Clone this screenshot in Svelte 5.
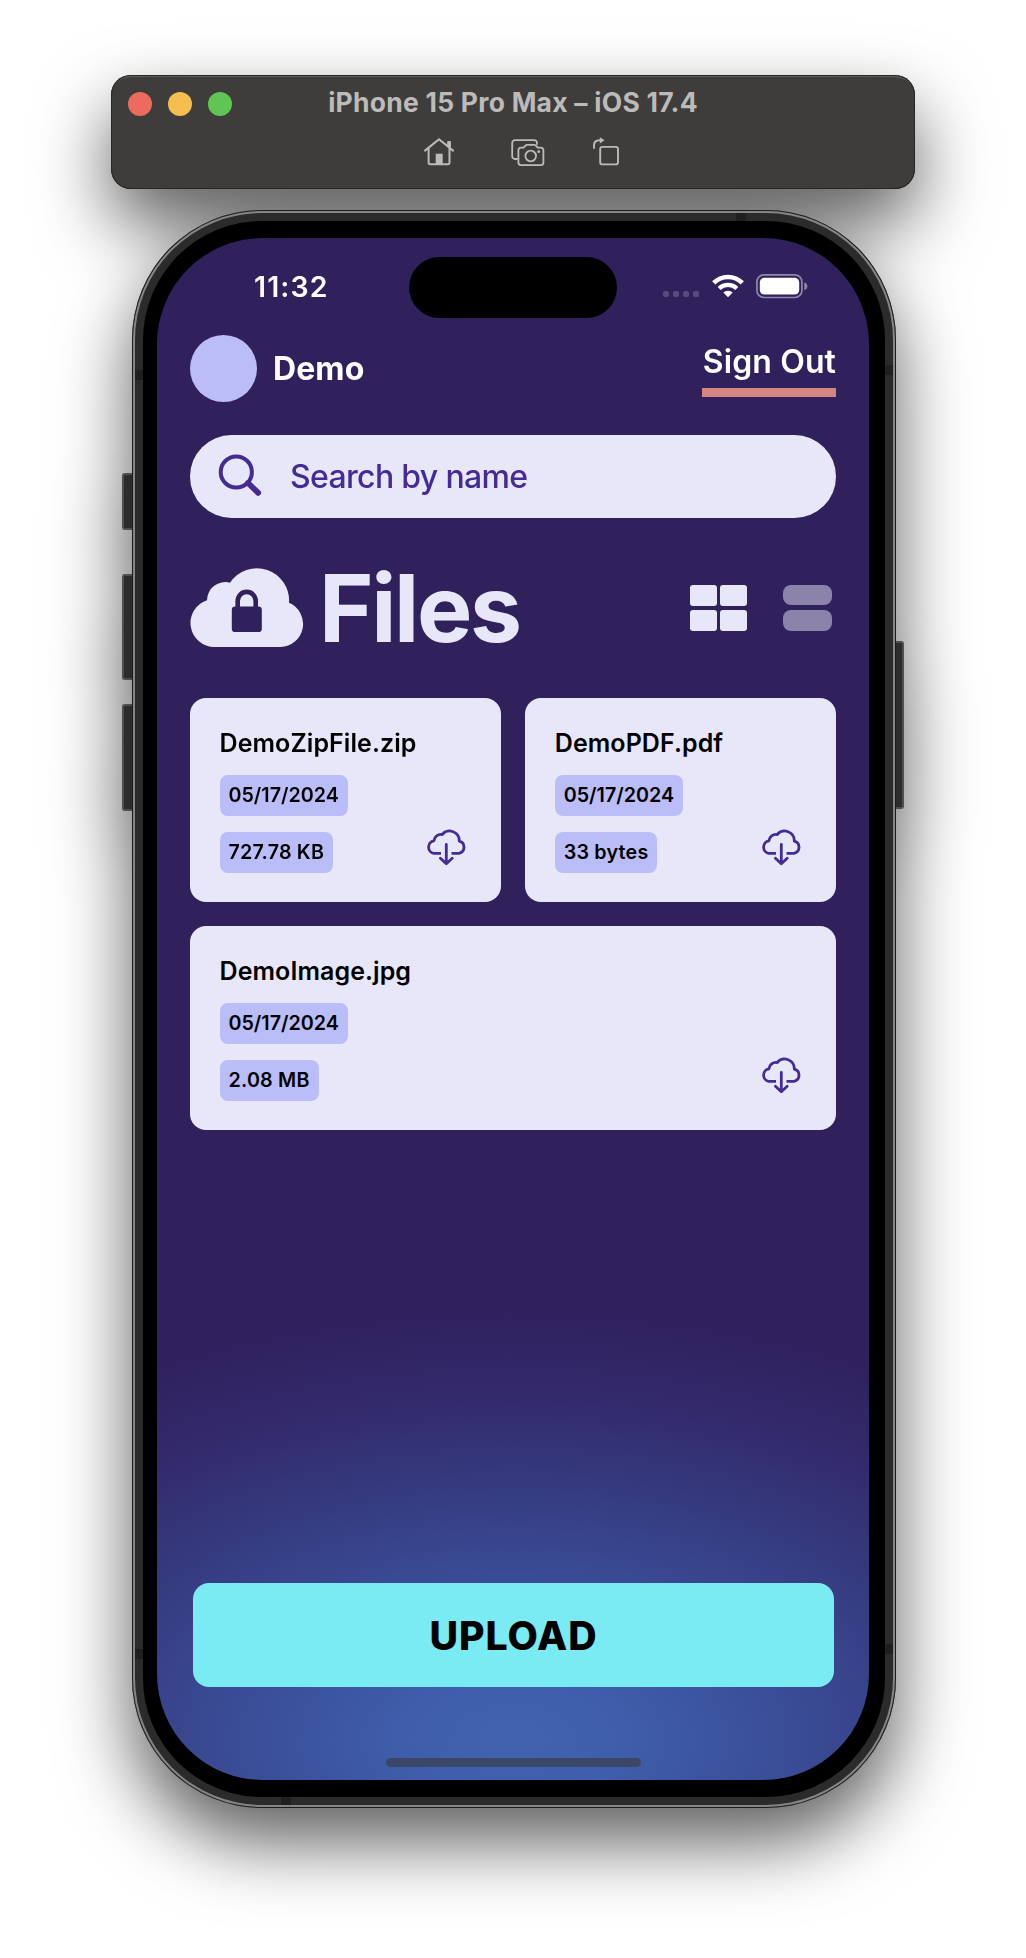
<script>
  const files = [
    { name: 'DemoZipFile.zip', date: '05/17/2024', size: '727.78 KB' },
    { name: 'DemoPDF.pdf', date: '05/17/2024', size: '33 bytes' },
    { name: 'DemoImage.jpg', date: '05/17/2024', size: '2.08 MB', wide: true }
  ];
</script>

<main class="stage">
  <header class="toolbar">
    <div class="titlebar">
      <div class="lights">
        <span class="light close"></span>
        <span class="light minimise"></span>
        <span class="light zoom"></span>
      </div>
      <h1>iPhone 15 Pro Max – iOS 17.4</h1>
    </div>
    <div class="tools">
      <svg class="home" width="30" height="30" viewBox="0 0 30 30" fill="none" stroke="currentColor" stroke-width="2" stroke-linecap="round" stroke-linejoin="round">
        <path d="M1 13.6 15 2.2 29 13.6" />
        <path d="M4.6 11.5V25.6a1.6 1.6 0 0 0 1.6 1.6H23.9a1.6 1.6 0 0 0 1.6-1.6V11.5" />
        <path d="M24 4.6h2.4v6.4L24 9Z" fill="currentColor" stroke-width="1" />
        <path d="M11.7 16.7h7v10.5h-7z" fill="currentColor" stroke="none" />
      </svg>
      <svg class="camera" width="34" height="30" viewBox="0 0 34 30" fill="none" stroke="currentColor" stroke-width="1.8" stroke-linecap="round" stroke-linejoin="round">
        <path d="M6 22H4a2.8 2.8 0 0 1-2.8-2.8V5.9A2.8 2.8 0 0 1 4 3.1H23.2A2.8 2.8 0 0 1 26 5.9V7" />
        <path d="M10 10.6H12.6L14.7 8.3Q15.2 7.8 16 7.8H23.4Q24.2 7.8 24.7 8.3L26.7 10.6H29.8A2.6 2.6 0 0 1 32.4 13.2V25.6A2.6 2.6 0 0 1 29.8 28.2H10A2.6 2.6 0 0 1 7.4 25.6V13.2A2.6 2.6 0 0 1 10 10.6Z" />
        <circle cx="19.7" cy="19" r="5.3" />
        <circle cx="27.7" cy="14.7" r="1.4" fill="currentColor" stroke="none" />
      </svg>
      <svg width="26" height="30" viewBox="0 0 26 30" fill="none" stroke="currentColor" stroke-width="1.9" stroke-linecap="round">
        <rect x="7.2" y="9.9" width="17.8" height="17.5" rx="2.2" />
        <path d="M1 11V8.500Q1 3.400 6.700 3.300" />
        <path d="M6.900 .3 11.500 3.300 6.900 6.400Z" fill="currentColor" stroke="none" />
      </svg>
    </div>
  </header>

  <div class="phone">
    <span class="side action"></span>
    <span class="side volume-up"></span>
    <span class="side volume-down"></span>
    <span class="side power"></span>
    <span class="band top"></span>
    <span class="band left upper"></span>
    <span class="band left lower"></span>
    <span class="band right upper"></span>
    <span class="band right lower"></span>
    <span class="band bottom"></span>

    <div class="bezel">
      <div class="screen">
        <div class="status">
          <time>11:32</time>
          <div class="island"></div>
          <div class="indicators">
            <div class="signal"><i></i><i></i><i></i><i></i></div>
            <svg class="wifi" width="32" height="24" viewBox="0 0 32 24" fill="none" stroke="#fff">
              <path d="M1.7 8.9A20.2 20.2 0 0 1 30.3 8.9" stroke-width="4.6" />
              <path d="M7.2 14.5A12.6 12.6 0 0 1 24.8 14.5" stroke-width="4.2" />
              <path d="M16 23.2 11.3 18.6A6.7 6.7 0 0 1 20.7 18.6Z" fill="#fff" stroke="none" />
            </svg>
            <svg class="battery" width="52" height="25" viewBox="0 0 52 25">
              <rect x=".9" y=".9" width="45" height="22.6" rx="7" fill="none" stroke="#8f86a9" stroke-width="1.7" />
              <rect x="3.8" y="3.8" width="39.4" height="16.8" rx="4.6" fill="#fff" />
              <path d="M48.3 8.200Q51.300 9.400 51.300 12.200T48.300 16.200Z" fill="#8f86a9" />
            </svg>
          </div>
        </div>

        <div class="account">
          <div class="avatar"></div>
          <span class="user">Demo</span>
          <a class="sign-out" href="#signout">Sign Out</a>
        </div>

        <div class="search">
          <svg width="44" height="42" viewBox="0 0 44 42" fill="none" stroke="currentColor" stroke-linecap="round">
            <circle cx="18.3" cy="18" r="15.6" stroke-width="4" />
            <path d="M30 29 40.2 38.8" stroke-width="5.8" />
          </svg>
          <span>Search by name</span>
        </div>

        <div class="heading">
          <svg width="114" height="79" viewBox="0 0 114 79">
            <path fill="#e8e7fa" d="M24.5 79A24 24 0 0 1 17 32.2A18.3 18.3 0 0 1 40 14.7A32.2 32.2 0 0 1 99 34.8A23 23 0 0 1 90.5 79Z" />
            <rect x="41.8" y="38.5" width="30" height="25.6" rx="3.4" fill="#30205c" />
            <path d="M47.7 40V32.9A9 9 0 0 1 65.7 32.9V40" fill="none" stroke="#30205c" stroke-width="4.6" />
          </svg>
          <h2>Files</h2>
          <div class="views">
            <div class="grid-view"><i></i><i></i><i></i><i></i></div>
            <div class="list-view"><i></i><i></i></div>
          </div>
        </div>

        <div class="files">
          {#each files as file}
            <article class="card" class:wide={file.wide}>
              <h3>{file.name}</h3>
              <span class="chip">{file.date}</span>
              <div class="card-foot">
                <span class="chip">{file.size}</span>
                <svg width="41" height="38" viewBox="0 0 41 38" fill="none" stroke="currentColor" stroke-width="2.8" stroke-linejoin="round">
                  <path d="M15 25.3H7.7A6.3 6.3 0 0 1 7.9 12.9A7.2 7.2 0 0 1 16.2 6.5A9.7 9.7 0 0 1 33.3 13.2A6.2 6.2 0 0 1 33 25.3H25.5" />
                  <path d="M20.3 16.5V35.5M14.4 30.3 20.3 35.8 26.2 30.3" stroke-linecap="round" />
                </svg>
              </div>
            </article>
          {/each}
        </div>

        <button class="upload" type="button">UPLOAD</button>
        <div class="home-indicator"></div>
      </div>
    </div>
  </div>
</main>

<style>
  :global(body) {
    background: #fff;
  }
  .stage {
    box-sizing: border-box;
    width: 1026px;
    height: 1958px;
    padding-top: 75px;
    overflow: hidden;
    font-family: Inter, 'Liberation Sans', sans-serif;
    filter: drop-shadow(0 34px 36px rgba(0, 0, 0, 0.63));
  }
  h1, h2, h3 {
    margin: 0;
  }
  svg {
    display: block;
    flex: none;
  }

  .toolbar {
    box-sizing: border-box;
    width: 804px;
    height: 114px;
    margin: 0 auto 21px;
    padding: 17px 17px 0;
    border-radius: 20px;
    background: #3e3d3b;
    box-shadow: inset 0 0 0 1px #262725, inset 0 2px 0 0 #5d5d5a;
    color: #bcbbb9;
  }
  .titlebar {
    display: grid;
    grid-template-columns: 1fr auto 1fr;
    align-items: start;
    height: 24px;
  }
  .lights {
    display: flex;
    gap: 16px;
  }
  .light {
    width: 24px;
    height: 24px;
    border-radius: 50%;
  }
  .close { background: #ed6a5e; }
  .minimise { background: #f4bf4f; }
  .zoom { background: #61c554; }
  h1 {
    font-size: 26.5px;
    font-weight: 700;
    line-height: 21px;
    letter-spacing: 0.24px;
  }
  .tools {
    display: flex;
    margin: 21px 0 0 296px;
  }
  .camera {
    margin: 0 48px 0 57px;
  }

  .phone {
    position: relative;
    box-sizing: border-box;
    width: 764px;
    height: 1598px;
    margin-left: 132px;
    padding: 11px;
    border-radius: 130px;
    background: #2b2b2b;
    box-shadow: inset 0 0 0 1px #1c1c1c, inset 0 0 0 3px #858585;
  }
  .side {
    position: absolute;
    box-sizing: border-box;
    width: 10px;
    background: #2c2c2c;
    border: 2px solid #4f4f4f;
  }
  .action, .volume-up, .volume-down {
    left: -10px;
    border-right: 0;
    border-radius: 3px 0 0 3px;
  }
  .action { top: 263px; height: 57px; }
  .volume-up { top: 364px; height: 106px; }
  .volume-down { top: 494px; height: 107px; }
  .power {
    right: -8px;
    width: 8px;
    top: 431px;
    height: 168px;
    border-left: 0;
    border-radius: 0 3px 3px 0;
  }
  .band {
    position: absolute;
    width: 8px;
    height: 10px;
    background: #1f1f1f;
  }
  .top, .bottom { width: 10px; height: 8px; }
  .top { top: 3px; left: 604px; }
  .bottom { bottom: 3px; left: 149px; }
  .left { left: 3px; }
  .right { right: 3px; }
  .left.upper { top: 160px; }
  .left.lower { top: 1439px; }
  .right.upper { top: 155px; }
  .right.lower { top: 1434px; }

  .bezel {
    position: relative;
    box-sizing: border-box;
    height: 100%;
    padding: 17px 16px 17px 14px;
    border-radius: 119px;
    background: #000;
  }
  .screen {
    box-sizing: border-box;
    display: flex;
    flex-direction: column;
    height: 100%;
    padding: 0 33px 13px;
    border-radius: 106px;
    overflow: hidden;
    background: radial-gradient(ellipse 830px 480px at 50% 1502px, #4163af 0%, #3f5daa 14%, #3a4d97 33%, #35397d 55%, #33296b 73%, #30225f 88%, #30205c 100%);
  }

  .status {
    display: flex;
    align-items: center;
    height: 97px;
    padding: 0 28px 0 64px;
    flex: none;
  }
  time {
    width: 155px;
    color: #fff;
    font-size: 28.5px;
    font-weight: 600;
    letter-spacing: 1.1px;
  }
  .island {
    width: 208px;
    height: 61px;
    margin-top: 2px;
    border-radius: 31px;
    background: #000;
  }
  .indicators {
    display: flex;
    align-items: center;
    margin-left: auto;
  }
  .signal {
    display: flex;
    gap: 4px;
    margin-top: 15px;
  }
  .signal i {
    width: 6px;
    height: 6px;
    border-radius: 2px;
    background: #594c7d;
  }
  .wifi { margin: -2px 12px 0 13px; }
  .battery { margin-top: -1px; }

  .account {
    display: flex;
    align-items: center;
    height: 67px;
    color: #fff;
    font-size: 32px;
    flex: none;
  }
  .avatar {
    width: 67px;
    height: 67px;
    margin-right: 16px;
    border-radius: 50%;
    background: #bbbdf8;
  }
  .user {
    font-weight: 700;
    letter-spacing: 0.1px;
  }
  .sign-out {
    align-self: flex-start;
    margin-left: auto;
    padding: 1px 0 0 1px;
    border-bottom: 9px solid #d58581;
    color: inherit;
    font-weight: 600;
    line-height: 52px;
    letter-spacing: 0.1px;
    text-decoration: none;
  }

  .search {
    display: flex;
    align-items: center;
    gap: 28px;
    box-sizing: border-box;
    height: 83px;
    margin-top: 33px;
    padding: 0 28px 3px;
    border-radius: 42px;
    background: #e8e7fa;
    color: #442b96;
    font-size: 32px;
    font-weight: 500;
    letter-spacing: -0.66px;
    flex: none;
  }
  .search span { padding-top: 3px; }

  .heading {
    display: flex;
    align-items: center;
    gap: 15px;
    height: 79px;
    margin-top: 50px;
    flex: none;
  }
  h2 {
    color: #e8e7fa;
    font-size: 93px;
    font-weight: 700;
    line-height: 79px;
    padding-top: 2px;
    letter-spacing: -2.35px;
  }
  .views {
    display: flex;
    gap: 36px;
    margin: 0 4px 0 auto;
  }
  .grid-view {
    display: grid;
    grid-template-columns: 27px 27px;
    gap: 4px 3px;
  }
  .grid-view i {
    height: 21px;
    border-radius: 3px;
    background: #e8e7fa;
  }
  .list-view {
    display: grid;
    grid-template-columns: 49px;
    gap: 5px;
  }
  .list-view i {
    height: 20.5px;
    border-radius: 8px;
    background: #8c83ab;
  }

  .files {
    display: grid;
    grid-template-columns: 1fr 1fr;
    gap: 24.5px;
    margin-top: 51px;
  }
  .card {
    box-sizing: border-box;
    height: 203.5px;
    padding: 29px 34px 0 29.5px;
    border-radius: 16px;
    background: #e8e7fa;
    color: #442b96;
  }
  .wide { grid-column: 1 / -1; }
  h3 {
    color: #000;
    font-size: 25px;
    font-weight: 560;
    line-height: 32px;
    letter-spacing: 0.08px;
    margin-bottom: 15.8px;
  }
  .chip {
    display: block;
    width: fit-content;
    padding: 0 9px;
    border-radius: 8px;
    background: #bbbdf8;
    color: #000;
    font-size: 19.7px;
    font-weight: 600;
    line-height: 41px;
  }
  .card-foot {
    display: flex;
    align-items: flex-end;
    justify-content: space-between;
    height: 41px;
    margin-top: 16px;
  }
  .card-foot .chip { letter-spacing: 0.2px; }
  .card-foot svg { margin-bottom: 7px; }

  .upload {
    height: 104px;
    margin: auto 2px 71px 3px;
    padding: 0;
    border: 0;
    border-radius: 16px;
    background: #7aebf2;
    color: #000;
    font: 800 39.3px Inter, 'Liberation Sans', sans-serif;
    letter-spacing: 0.9px;
    flex: none;
  }
  .home-indicator {
    align-self: center;
    width: 255px;
    height: 9px;
    border-radius: 5px;
    background: #3b4766;
    flex: none;
  }
</style>
